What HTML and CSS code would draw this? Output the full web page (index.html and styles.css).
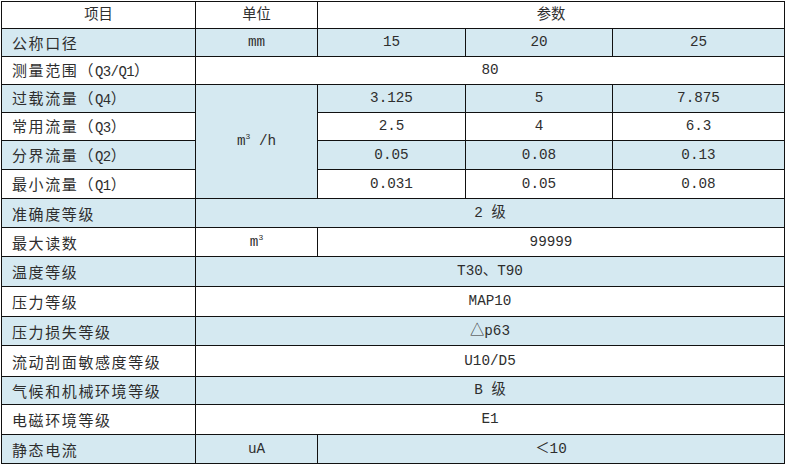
FILE: index.html
```html
<!DOCTYPE html>
<html lang="zh-CN">
<head>
<meta charset="utf-8">
<title>参数表</title>
<link rel="stylesheet" href="styles.css">
</head>
<body>
<table class="spec">
  <colgroup>
    <col class="c1"><col class="c2"><col class="c3"><col class="c4"><col class="c5">
  </colgroup>
  <tr class="r1">
    <td class="ctr">项目</td><td class="ctr">单位</td><td class="ctr" colspan="3">参数</td>
  </tr>
  <tr class="r2 blue">
    <td class="lbl">公称口径</td><td class="ctr">mm</td><td class="ctr">15</td><td class="ctr">20</td><td class="ctr">25</td>
  </tr>
  <tr class="r3">
    <td class="lbl">测量范围（<span class="lat">Q3/Q1</span>）</td><td class="ctr" colspan="4">80</td>
  </tr>
  <tr class="r4 blue">
    <td class="lbl">过载流量（<span class="lat">Q4</span>）</td><td class="ctr unit" rowspan="4">m<sup>3</sup> /h</td><td class="ctr">3.125</td><td class="ctr">5</td><td class="ctr">7.875</td>
  </tr>
  <tr class="r5">
    <td class="lbl">常用流量（<span class="lat">Q3</span>）</td><td class="ctr">2.5</td><td class="ctr">4</td><td class="ctr">6.3</td>
  </tr>
  <tr class="r6 blue">
    <td class="lbl">分界流量（<span class="lat">Q2</span>）</td><td class="ctr">0.05</td><td class="ctr">0.08</td><td class="ctr">0.13</td>
  </tr>
  <tr class="r7">
    <td class="lbl">最小流量（<span class="lat">Q1</span>）</td><td class="ctr">0.031</td><td class="ctr">0.05</td><td class="ctr">0.08</td>
  </tr>
  <tr class="r8 blue">
    <td class="lbl">准确度等级</td><td class="ctr" colspan="4">2 级</td>
  </tr>
  <tr class="r9">
    <td class="lbl">最大读数</td><td class="ctr">m<sup>3</sup></td><td class="ctr" colspan="3">99999</td>
  </tr>
  <tr class="r10 blue">
    <td class="lbl">温度等级</td><td class="ctr" colspan="4">T30、T90</td>
  </tr>
  <tr class="r11">
    <td class="lbl">压力等级</td><td class="ctr" colspan="4">MAP10</td>
  </tr>
  <tr class="r12 blue">
    <td class="lbl">压力损失等级</td><td class="ctr" colspan="4">△p63</td>
  </tr>
  <tr class="r13">
    <td class="lbl">流动剖面敏感度等级</td><td class="ctr" colspan="4">U10/D5</td>
  </tr>
  <tr class="r14 blue">
    <td class="lbl">气候和机械环境等级</td><td class="ctr" colspan="4">B 级</td>
  </tr>
  <tr class="r15">
    <td class="lbl">电磁环境等级</td><td class="ctr" colspan="4">E1</td>
  </tr>
  <tr class="r16 blue">
    <td class="lbl">静态电流</td><td class="ctr">uA</td><td class="ctr" colspan="3">＜10</td>
  </tr>
</table>
</body>
</html>
```

FILE: styles.css
```css
html, body {
  margin: 0;
  padding: 0;
  background: #ffffff;
}
body {
  padding: 1px 0 0 1px;
}
.spec {
  border-collapse: collapse;
  table-layout: fixed;
  width: 783px;
  font-family: "Liberation Mono", "Noto Sans CJK SC", monospace;
  font-size: 14.3px;
  color: #2e2e2e;
}
.c1 { width: 194px; }
.c2 { width: 122px; }
.c3 { width: 148px; }
.c4 { width: 147px; }
.c5 { width: 172px; }
.spec td {
  border: 1px solid #111;
  padding: 0;
  vertical-align: middle;
  line-height: 1;
  white-space: nowrap;
}
.spec .blue td,
.spec td.unit {
  background: #d5e9f1;
}
.spec td.lbl {
  font-family: "Noto Sans CJK SC", sans-serif;
  font-size: 15px;
  letter-spacing: 1.6px;
  padding-left: 10px;
  text-align: left;
}
.spec td.lbl .lat {
  font-family: "Liberation Mono", monospace;
  font-size: 14px;
  letter-spacing: -0.6px;
}
.spec td.ctr {
  text-align: center;
}
sup {
  font-size: 8px;
  vertical-align: 6px;
  line-height: 0;
}
.r1 { height: 27px; }
.r2, .r3, .r4, .r5 { height: 28px; }
.r6, .r7, .r8, .r9 { height: 29px; }
.r10, .r11 { height: 30px; }
.r12 { height: 29px; }
.r13 { height: 31px; }
.r14 { height: 28px; }
.r15 { height: 30px; }
.r16 { height: 29px; }
```
